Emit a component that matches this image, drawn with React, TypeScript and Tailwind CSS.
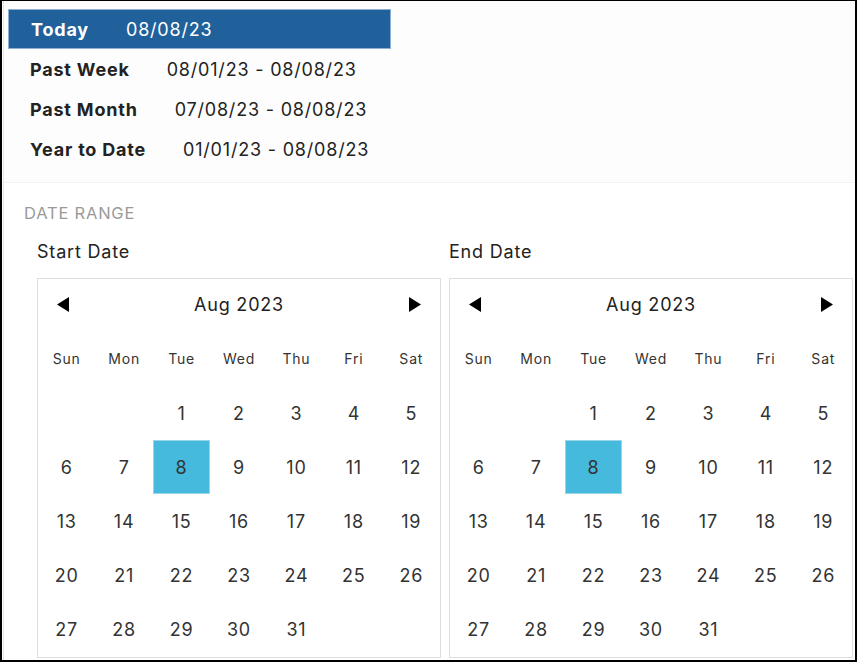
import React from "react";

const presets = [
  { label: "Today", value: "08/08/23", active: true },
  { label: "Past Week", value: "08/01/23 - 08/08/23" },
  { label: "Past Month", value: "07/08/23 - 08/08/23" },
  { label: "Year to Date", value: "01/01/23 - 08/08/23" },
];

const weekdays = ["Sun", "Mon", "Tue", "Wed", "Thu", "Fri", "Sat"];

// Aug 2023 starts on a Tuesday
const cells: (number | null)[] = [null, null, ...Array.from({ length: 31 }, (_, i) => i + 1)];
while (cells.length < 35) cells.push(null);

function Triangle({ dir }: { dir: "left" | "right" }) {
  return (
    <svg width="12" height="15" viewBox="0 0 12 15" className="block">
      {dir === "left" ? (
        <path d="M12 0 L0 7.5 L12 15 Z" fill="#000" />
      ) : (
        <path d="M0 0 L12 7.5 L0 15 Z" fill="#000" />
      )}
    </svg>
  );
}

function Calendar({ selected }: { selected: number }) {
  return (
    <div className="w-[404px] h-[380px] border border-[#dedede] bg-white">
      <div className="h-[51px] flex items-center justify-between px-[19px]">
        <button className="p-0">
          <Triangle dir="left" />
        </button>
        <span className="text-[18px] text-[#222]">Aug 2023</span>
        <button className="p-0">
          <Triangle dir="right" />
        </button>
      </div>
      <div className="grid grid-cols-7">
        {weekdays.map((d) => (
          <div key={d} className="h-[56px] flex items-center justify-center text-[14px] text-[#333]">
            {d}
          </div>
        ))}
        {cells.map((n, i) => (
          <div
            key={i}
            className={`h-[54px] flex items-center justify-center text-[18px] text-[#333] ${
              n === selected ? "bg-[#45badc] border border-[#9ad6ea]" : ""
            }`}
          >
            {n ?? ""}
          </div>
        ))}
      </div>
    </div>
  );
}

export default function App() {
  return (
    <div
      className="w-[857px] h-[662px] overflow-hidden bg-white border-t border-l-2 border-r-2 border-b-2 border-black tracking-[0.05em]"
      style={{ fontFamily: "Inter, 'Noto Sans', sans-serif" }}
    >
      <div className="h-full ml-px border-l border-[#e6e6e6]">
        <div className="h-[182px] bg-[#fdfdfd] border-b border-[#f2f2f2] pt-2 pl-[4px]">
          {presets.map((p) => (
            <div
              key={p.label}
              className={`w-[383px] h-10 flex items-center pl-[22px] text-[18px] ${
                p.active ? "bg-[#21619b] border border-[#8eb0d2] text-white" : "text-[#222]"
              }`}
            >
              <span className="font-bold mr-[37px]">{p.label}</span>
              <span>{p.value}</span>
            </div>
          ))}
        </div>
        <div className="pl-[20px] pt-[19px]">
          <div className="text-[16.5px] text-[#9a9a9a] h-[22px] leading-[22px]">DATE RANGE</div>
          <div className="flex gap-2 pl-[13px] mt-[16px]">
            <div>
              <div className="text-[18px] text-[#222] h-[24px] leading-[24px] mb-[14px]">Start Date</div>
              <Calendar selected={8} />
            </div>
            <div>
              <div className="text-[18px] text-[#222] h-[24px] leading-[24px] mb-[14px]">End Date</div>
              <Calendar selected={8} />
            </div>
          </div>
        </div>
      </div>
    </div>
  );
}
